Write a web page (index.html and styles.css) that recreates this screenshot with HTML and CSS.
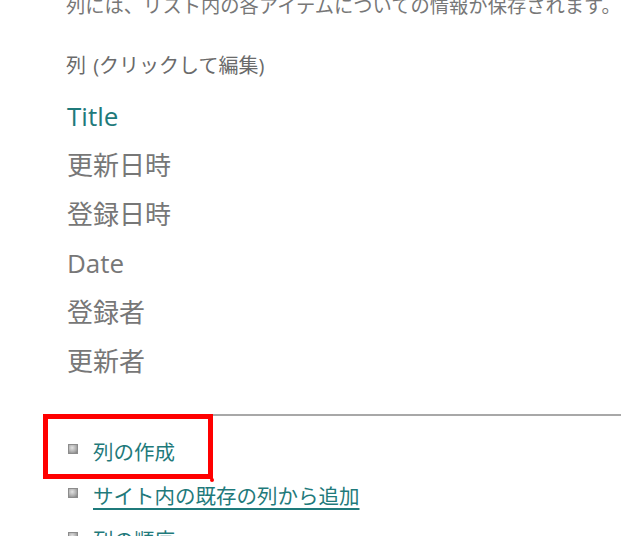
FILE: index.html
```html
<!DOCTYPE html>
<html lang="ja">
<head>
<meta charset="utf-8">
<title>列</title>
<link rel="stylesheet" href="styles.css">
</head>
<body>
<div class="page">
  <p class="desc">列には、リスト内の各アイテムについての情報が保存されます。</p>
  <h2 class="cols-head">列 (クリックして編集)</h2>
  <ul class="col-list">
    <li class="col col-link">Title</li>
    <li class="col">更新日時</li>
    <li class="col">登録日時</li>
    <li class="col">Date</li>
    <li class="col">登録者</li>
    <li class="col">更新者</li>
  </ul>
  <div class="divider"></div>
  <ul class="links">
    <li class="link-item"><span class="bullet"></span><span class="link">列の作成</span></li>
    <li class="link-item"><span class="bullet"></span><span class="link link-under">サイト内の既存の列から追加</span></li>
    <li class="link-item"><span class="bullet"></span><span class="link">列の順序</span></li>
  </ul>
  <div class="highlight"></div>
</div>
</body>
</html>
```

FILE: styles.css
```css
html, body {
  margin: 0;
  padding: 0;
  background: #ffffff;
  overflow: hidden;
}

body {
  font-family: "Open Sans", "Noto Sans CJK JP", sans-serif;
  color: #777777;
}

.page {
  position: relative;
  padding-left: 66px;
  height: 540px;
}

.desc {
  margin: -4px 0 0 0;
  font-size: 19.3px;
  line-height: 19px;
  color: #777777;
  white-space: nowrap;
}

.cols-head {
  margin: 41px 0 0 0;
  font-size: 20px;
  line-height: 19px;
  font-weight: normal;
  color: #6a6a6a;
  word-spacing: 2px;
}

.col-list {
  list-style: none;
  margin: 17px 0 0 0;
  padding: 0 0 0 1px;
}

.col {
  font-size: 26px;
  line-height: 49px;
  height: 49px;
  color: #777777;
}

.col-link {
  color: #1f7a7b;
}

.divider {
  margin: 28px 0 0 -8px;
  border-top: 2px solid #a8a8a8;
}

.links {
  list-style: none;
  margin: 14px 0 0 0;
  padding: 0 0 0 2px;
}

.link-item {
  display: flex;
  align-items: center;
  gap: 15px;
  height: 44px;
}

.bullet {
  flex: none;
  width: 8px;
  height: 8px;
  border: 1px solid #8c8c8c;
  background: radial-gradient(circle at 40% 35%, #e2e2e2 0%, #b0b0b0 55%, #7e7e7e 100%);
  margin-bottom: 7px;
}

.link {
  font-size: 20.5px;
  line-height: 44px;
  color: #1f7a7b;
}

.link-under {
  text-decoration: underline;
  text-underline-offset: 4px;
  text-decoration-thickness: 2px;
}

.highlight {
  position: absolute;
  left: 43px;
  top: 418px;
  width: 160px;
  height: 55px;
  border: 5px solid #ff0000;
}

.highlight::after {
  content: "";
  position: absolute;
  right: -6px;
  bottom: -8px;
  width: 4px;
  height: 4px;
  background: #ff0000;
  border-radius: 2px;
}
```
